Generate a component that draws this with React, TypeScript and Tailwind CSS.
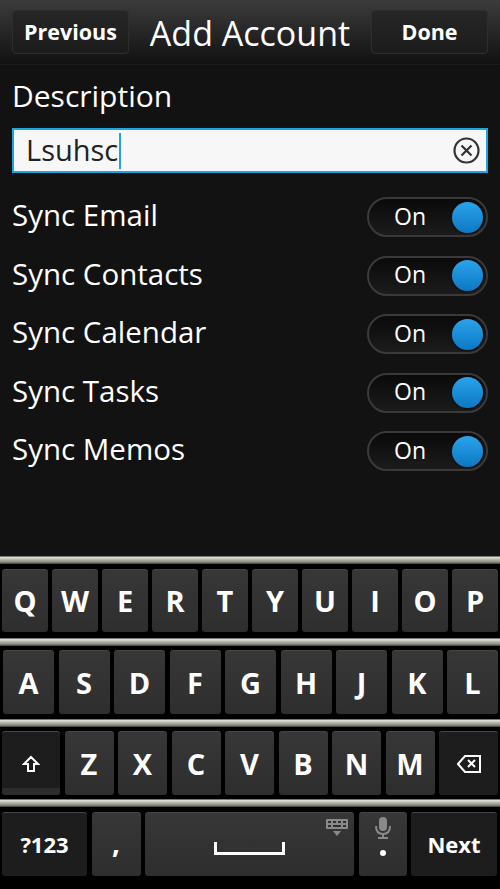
import React from 'react';

const font = { fontFamily: '"Open Sans", "Noto Sans", sans-serif' };

const rows = ['Sync Email', 'Sync Contacts', 'Sync Calendar', 'Sync Tasks', 'Sync Memos'];

const Toggle = () => (
  <div className="w-[121px] h-[40px] rounded-full border-2 border-[#3a3a3a] bg-gradient-to-b from-[#0a0a0a] to-[#1c1c1c] flex items-center pl-[25px] pr-[3px]">
    <span className="text-[23px] text-white flex-1 leading-none pb-[2px]">On</span>
    <span className="w-[31px] h-[31px] rounded-full bg-gradient-to-b from-[#2aa3ea] to-[#0b78c4] shadow-[0_1px_2px_rgba(0,0,0,0.6)]" />
  </div>
);

const Bar = () => (
  <div className="h-[8px] bg-[linear-gradient(to_bottom,#4a4a46_0%,#e4e4dc_20%,#b4b4ac_45%,#8e8e86_75%,#3c3c38_100%)]" />
);

const Key = ({ children, w, dark, className = '' }: any) => (
  <div
    className={`h-full rounded-[3px] flex items-center justify-center text-white font-bold border-t border-[#454545] ${
      dark ? 'bg-[#1d1d1d] border-[#2c2c2c]' : 'bg-gradient-to-b from-[#373737] to-[#2e2e2e]'
    } ${className}`}
    style={{ width: w }}
  >
    {children}
  </div>
);

const ShiftIcon = () => (
  <svg width="18" height="18" viewBox="0 0 18 18" fill="none" stroke="white" strokeWidth="2" strokeLinejoin="miter">
    <path d="M9 2 L16 9 H12 V16 H6 V9 H2 Z" />
  </svg>
);

const BackIcon = () => (
  <svg width="24" height="18" viewBox="0 0 24 18" fill="none" stroke="white" strokeWidth="2">
    <path d="M8 1 H23 V17 H8 L1 9 Z" />
    <path d="M11 5 L18 12 M18 5 L11 12" />
  </svg>
);

const KbIcon = () => (
  <svg width="22" height="17" viewBox="0 0 22 17" fill="#8a8a8a">
    <rect x="0" y="0" width="22" height="10" rx="1" />
    <g fill="#2f2f2f">
      <rect x="2" y="2" width="3" height="2" />
      <rect x="7" y="2" width="3" height="2" />
      <rect x="12" y="2" width="3" height="2" />
      <rect x="17" y="2" width="3" height="2" />
      <rect x="2" y="6" width="3" height="2" />
      <rect x="7" y="6" width="8" height="2" />
      <rect x="17" y="6" width="3" height="2" />
    </g>
    <path d="M7 12 H15 L11 17 Z" />
  </svg>
);

const MicIcon = () => (
  <svg width="18" height="22" viewBox="0 0 18 22" fill="none">
    <rect x="5" y="0" width="8" height="14" rx="4" fill="#8a8a8a" />
    <path d="M2 9 Q2 17 9 17 Q16 17 16 9" stroke="#8a8a8a" strokeWidth="2" />
    <path d="M9 17 V21 M4 21 H14" stroke="#8a8a8a" strokeWidth="2" />
  </svg>
);

export default function App() {
  const row1 = ['Q', 'W', 'E', 'R', 'T', 'Y', 'U', 'I', 'O', 'P'];
  const row2 = ['A', 'S', 'D', 'F', 'G', 'H', 'J', 'K', 'L'];
  const row3 = ['Z', 'X', 'C', 'V', 'B', 'N', 'M'];

  return (
    <div className="w-[500px] h-[889px] flex flex-col bg-[#121212] overflow-hidden" style={font}>
      {/* header */}
      <div className="h-[65px] bg-gradient-to-b from-[#3c3c3c] to-[#121212] border-b border-[#1c1c1c] flex items-start pt-[10px] px-[12px]">
        <button className="w-[117px] h-[44px] rounded-[4px] border border-[#2e2e2e] bg-[#1e1e1e]/60 text-white font-bold text-[21.5px] leading-none">
          Previous
        </button>
        <div className="flex-1 text-center text-white text-[34px] leading-[46px]">Add Account</div>
        <button className="w-[117px] h-[44px] rounded-[4px] border border-[#2e2e2e] bg-[#1e1e1e]/60 text-white font-bold text-[21.5px] leading-none">
          Done
        </button>
      </div>

      {/* form */}
      <div className="flex-1 px-[12px]">
        <div className="text-white text-[30px] leading-none mt-[16px] mb-[17px]">Description</div>
        <div className="h-[45px] bg-[#f7f7f7] border-2 border-[#1ea6e0] flex items-center pl-[12px] pr-[6px]">
          <span className="text-[#222] text-[29px] leading-none pb-[3px]">Lsuhsc</span>
          <span className="w-[2px] h-[36px] bg-[#1ea6e0] ml-[1px]" />
          <span className="flex-1" />
          <svg width="27" height="27" viewBox="0 0 27 27" fill="none" stroke="#333" strokeWidth="2.2">
            <circle cx="13.5" cy="13.5" r="12" />
            <path d="M8.5 8.5 L18.5 18.5 M18.5 8.5 L8.5 18.5" />
          </svg>
        </div>
        <div className="flex flex-col mt-[24px] gap-[18.5px]">
          {rows.map((r) => (
            <div key={r} className="flex items-center justify-between h-[40px]">
              <span className="text-white text-[29.5px] leading-none pb-[4px]">{r}</span>
              <Toggle />
            </div>
          ))}
        </div>
      </div>

      {/* keyboard */}
      <div className="h-[333px] bg-black flex flex-col">
        <Bar />
        <div className="h-[74px] pt-[5px] pb-[6px] px-[2px] flex gap-[4px]">
          {row1.map((k) => (
            <Key key={k} w={46} className="text-[29px]">{k}</Key>
          ))}
        </div>
        <Bar />
        <div className="h-[73px] pt-[4px] pb-[5px] pl-[3px] pr-[2px] flex gap-[4.5px]">
          {row2.map((k) => (
            <Key key={k} w={51} className="text-[29px]">{k}</Key>
          ))}
        </div>
        <Bar />
        <div className="h-[72px] pt-[4px] pb-[4px] px-[2px] flex gap-[4.5px]">
          <Key w={58} dark className="relative">
            <ShiftIcon />
            <span className="absolute bottom-0 left-0 right-0 h-[7px] bg-[#2c2c2c] rounded-b-[3px]" />
          </Key>
          {row3.map((k) => (
            <Key key={k} w={49} className="text-[29px]">{k}</Key>
          ))}
          <Key w={59} dark>
            <BackIcon />
          </Key>
        </div>
        <Bar />
        <div className="h-[69px] pt-[5px] pb-0 px-[2px] flex gap-[4.5px]">
          <Key w={85} dark className="text-[22px]">?123</Key>
          <Key w={49} className="text-[28px] pb-[6px]">,</Key>
          <Key w={209} className="relative">
            <svg width="71" height="13" viewBox="0 0 71 13" fill="none" stroke="white" strokeWidth="3" className="mt-[8px]">
              <path d="M1.5 0 V11.5 H69.5 V0" />
            </svg>
            <span className="absolute top-[6px] right-[6px]">
              <KbIcon />
            </span>
          </Key>
          <Key w={48} className="relative">
            <span className="absolute top-[4px] left-1/2 -translate-x-1/2">
              <MicIcon />
            </span>
            <span className="w-[6px] h-[6px] rounded-full bg-white mt-[16px]" />
          </Key>
          <Key w={86} dark className="text-[22px]">Next</Key>
        </div>
        <div className="flex-1" />
      </div>
    </div>
  );
}
